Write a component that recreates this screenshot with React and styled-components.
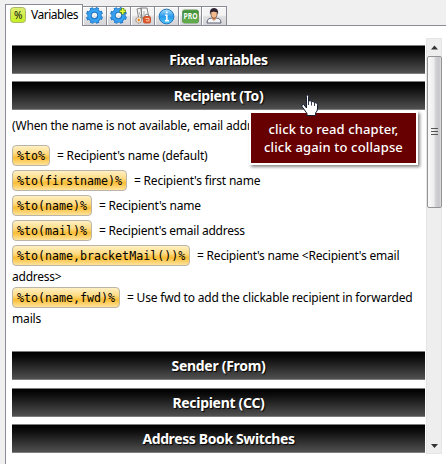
import React from "react";
import styled, { createGlobalStyle } from "styled-components";

const Global = createGlobalStyle`
  *{box-sizing:border-box}
  html,body{margin:0;background:#f0f0f0;overflow:hidden}
  body{font:12px/16px "Noto Sans","Open Sans",sans-serif;color:#000}
`;
const Window = styled.main`
  height:464px;width:446px;padding:4px 0 0 5px;display:flex;flex-direction:column;
`;
const TabBar = styled.nav`
  height:22px;display:flex;align-items:flex-end;flex:none;position:relative;z-index:1;
`;
const ActiveTab = styled.button`
  width:78px;height:22px;padding:0 0 2px 4px;border:1px solid #8a8c95;border-bottom:0;background:#fff;
  display:flex;align-items:center;gap:5px;font:inherit;letter-spacing:${p => p.$track}px;white-space:nowrap;
  & svg{flex:none}
`;
const Tab = styled.button`
  width:${p => p.$w || 24}px;height:20px;padding:0;border:1px solid #8a8c95;border-left:0;
  background:linear-gradient(#f4f4f4 45%,#dfdfe1 55%,#d6d6d8);display:flex;align-items:center;justify-content:center;
  box-shadow:inset 1px 1px #fff;
`;
const Panel = styled.section`
  flex:1;min-height:0;background:#fff;border:solid #8a8c95;border-width:1px 0 0 1px;margin-top:-1px;
  display:flex;align-items:flex-start;
`;
const Content = styled.div`width:413px;margin:19px 1px 0 6px;flex:none;`;
const Chapter = styled.h2`
  height:29px;margin:0 0 ${p => p.$gap ?? 7}px;border:solid #7d7d7d;border-width:1px 0;
  background:linear-gradient(#000 0%,#0b0b0b 20%,#505050 100%);color:#fff;text-align:center;
  font:bold 14px/28px "Noto Sans","Open Sans",sans-serif;letter-spacing:${p => p.$track}px;
  text-shadow:1px 1px 1px #000;position:relative;
`;
const Note = styled.p`height:35px;margin:0;padding-top:8px;white-space:nowrap;letter-spacing:${p => p.$track}px;`;
const Details = styled.div`height:241px;overflow:hidden;margin-top:-7px;`;
const Row = styled.div`height:25px;display:flex;align-items:flex-start;white-space:nowrap;`;
const Chip = styled.code`
  height:21px;width:${p => p.$w}px;flex:none;padding-left:4px;border:1px solid #bbb5a8;border-radius:4px;
  background:linear-gradient(#fff0c4,#fedb83 40%,#f9bd35 62%,#ffe39d);
  font:11.65px/20px "DejaVu Sans Mono",monospace;
`;
const Meaning = styled.span`margin-left:7px;line-height:22px;letter-spacing:${p => p.$track}px;`;
const Wrapped = styled.div`height:17px;line-height:14px;letter-spacing:${p => p.$track}px;`;
const Tooltip = styled.div`
  position:absolute;left:237px;top:29px;width:169px;height:54px;border:2px solid #fff;background:#670000;
  box-shadow:2px 2px 3px #888;color:#fff;text-align:center;z-index:2;text-shadow:none;white-space:nowrap;
  font:500 13px/18px "Noto Sans","Open Sans",sans-serif;padding-top:7px;
`;
const TipLine = styled.div`letter-spacing:${p => p.$track}px;`;
const Pointer = styled.svg`position:absolute;left:289px;top:12px;z-index:3;`;
const Scrollbar = styled.div`
  width:16px;height:416px;margin-top:12px;background:#eee;border:1px solid #e5e5e5;
  display:flex;flex-direction:column;align-items:center;
`;
const Arrow = styled.svg`flex:none;display:block;`;
const Thumb = styled.div`
  width:15px;height:152px;flex:none;border:1px solid #949494;border-radius:2px;
  background:linear-gradient(90deg,#fafafa,#ededed 45%,#d1d1d5 60%,#c7c7cb 85%,#dedee0);
  display:flex;align-items:center;justify-content:center;
`;
const Track = styled.div`flex:1;`;

const Gear = ({ plus }) => (
  <svg width="18" height="18" viewBox="0 0 17 17">
    <g transform="rotate(8 8 8)">
      <circle cx="8" cy="8" r="4.7" fill="none" stroke="#1671c4" strokeWidth="4.2" />
      <circle cx="8" cy="8" r="6.8" fill="none" stroke="#1671c4" strokeWidth="2.4" strokeDasharray="2.9 2.44" />
      <circle cx="8" cy="8" r="4.8" fill="none" stroke="#38a2f1" strokeWidth="2.6" />
      <circle cx="8" cy="8" r="6.6" fill="none" stroke="#38a2f1" strokeWidth="1.2" strokeDasharray="1.9 3.28" strokeDashoffset="-.5" />
    </g>
    {plus && <path d="M12 1v6M9 4h6" stroke="#52821a" strokeWidth="3" />}
    {plus && <path d="M12 1.5v5M9.5 4h5" stroke="#eaff3c" strokeWidth="1.5" />}
  </svg>
);
const Percent = () => (
  <svg width="16" height="16" viewBox="0 0 16 16">
    <defs><linearGradient id="lime" x2="0" y2="1"><stop stopColor="#e0ee76" /><stop offset="1" stopColor="#c5ef20" /></linearGradient></defs>
    <rect x=".5" y=".5" width="15" height="15" rx="3" fill="url(#lime)" stroke="#a9b56a" />
    <text x="8" y="12" textAnchor="middle" textLength="8" lengthAdjust="spacingAndGlyphs" fontFamily="Noto Sans" fontSize="11" fill="#111">%</text>
  </svg>
);
const Files = () => (
  <svg width="18" height="18" viewBox="0 0 18 18">
    <path d="M3 2l4-1 1 11-3 1zM7 1h6l2 10H8z" fill="#f8f8f8" stroke="#777" strokeWidth=".9" />
    <path d="M5 5l2 5m3-6v6" stroke="#aaa" />
    <circle cx="4.8" cy="13" r="3" fill="#efe4d1" stroke="#88776a" strokeDasharray="1.5 .6" />
    <circle cx="4.8" cy="13" r="1.2" fill="#e98725" />
    <rect x="9.5" y="9.5" width="7" height="6.5" rx="1.3" fill="#e0592e" stroke="#c5532f" />
    <path d="M11 9V8q2-2 4 0v1" fill="none" stroke="#888" /><path d="M11.5 11.5h3.5v2.5h-2.5v-1" fill="none" stroke="#ffc0a0" />
  </svg>
);
const Info = () => (
  <svg width="17" height="17" viewBox="0 0 17 17">
    <defs><linearGradient id="sky" x2="0" y2="1"><stop stopColor="#a8ddff" /><stop offset=".5" stopColor="#289bea" /><stop offset="1" stopColor="#54c4fa" /></linearGradient></defs>
    <circle cx="8.5" cy="8.5" r="7.4" fill="url(#sky)" stroke="#2378bb" />
    <path d="M7.2 7.3h1.6v5M7 12.7h4M7.8 4.4h1.8" fill="none" stroke="#fff" strokeWidth="1.6" />
  </svg>
);
const Pro = () => (
  <svg width="17" height="15" viewBox="0 0 17 15">
    <rect x=".5" y="1" width="16" height="13" rx="2" fill="#45963a" stroke="#67985d" />
    <path d="M1 9h15v3q0 2-2 2H3q-2 0-2-2z" fill="#60aa4b" />
    <text x="8.500" y="9.500" textAnchor="middle" textLength="14" lengthAdjust="spacingAndGlyphs" fontFamily="Noto Sans" fontWeight="700" fontSize="8" fill="#fff">PRO</text>
  </svg>
);
const Person = () => (
  <svg width="18" height="18" viewBox="0 0 18 18">
    <path d="M2 16q0-5 5-5h4q5 0 5 5z" fill="#f4f5f9" stroke="#5d6170" />
    <path d="M7 10h4v2l-2 2-2-2z" fill="#ce8e64" />
    <ellipse cx="9" cy="6.7" rx="3" ry="4.4" fill="#f2bb8d" stroke="#543125" strokeWidth=".6" />
    <path d="M5 8Q4 1 9 1t4 7l-1-3q-3 0-3-.5-2 .5-3 .5z" fill="#2d2031" />
  </svg>
);

const before = [
  ["%to%", 38, "= Recipient's name (default)", -0.19],
  ["%to(firstname)%", 115, "= Recipient's first name", -0.2],
  ["%to(name)%", 80, "= Recipient's name", -0.22],
  ["%to(mail)%", 80, "= Recipient's email address", -0.23],
];

const Variable = ({ code, width, text, track }) => (
  <Row><Chip $w={width}>{code}</Chip><Meaning $track={track}>{text}</Meaning></Row>
);

export default function App() {
  return (
    <Window>
      <Global />
      <TabBar>
        <ActiveTab $track={-0.5}><Percent />Variables</ActiveTab>
        <Tab><Gear /></Tab><Tab><Gear plus /></Tab><Tab><Files /></Tab>
        <Tab><Info /></Tab><Tab $w={23}><Pro /></Tab><Tab $w={25}><Person /></Tab>
      </TabBar>
      <Panel>
        <Content>
          <Chapter $track={-0.38}>Fixed variables</Chapter>
          <Chapter $track={-0.35}>
            Recipient (To)
            <Pointer width="18" height="23" viewBox="0 0 18 23">
              <path d="M5.500 14V2.500Q5.500 1 6.500 1T7.500 2.500V7Q9.500 6 10.300 7.700 12.500 6.800 13.200 8.700 16 8 16.500 10.500V15Q16.500 17 14.500 19V21.500H6V19.500L1 12.500Q.5 10 2.500 10.200Z" fill="#fff" stroke="#172033" />
              <path d="M7.500 7v4M10.500 8v3.500M13.500 9v3" stroke="#333c55" />
            </Pointer>
            <Tooltip><TipLine $track={0.1}>click to read chapter,</TipLine><TipLine $track={0.16}>click again to collapse</TipLine></Tooltip>
          </Chapter>
          <Details>
            <Note $track={-0.17}>(When the name is not available, email addr</Note>
            {before.map(([code, width, text, track]) => <Variable key={code} code={code} width={width} text={text} track={track} />)}
            <Variable code="%to(name,bracketMail())%" width={178} text="= Recipient's name <Recipient's email" track={-0.21} />
            <Wrapped $track={-0.23}>address&gt;</Wrapped>
            <Variable code="%to(name,fwd)%" width={108} text="= Use fwd to add the clickable recipient in forwarded" track={-0.19} />
            <Wrapped $track={-0.15}>mails</Wrapped>
          </Details>
          <Chapter $track={-0.3} $gap={8}>Sender (From)</Chapter>
          <Chapter $track={-0.3}>Recipient (CC)</Chapter>
          <Chapter $track={-0.38} $gap={0}>Address Book Switches</Chapter>
        </Content>
        <Scrollbar>
          <Arrow width="14" height="17" viewBox="0 0 14 17"><path d="M7.500 6.500l3.500 4H4z" fill="#333" /></Arrow>
          <Thumb><svg width="7" height="8"><path d="M0 .5h7M0 3.5h7M0 6.5h7" stroke="#555" /></svg></Thumb>
          <Track />
          <Arrow width="14" height="14" viewBox="0 0 14 14"><path d="M4 5h7l-3.500 4z" fill="#333" /></Arrow>
        </Scrollbar>
      </Panel>
    </Window>
  );
}
